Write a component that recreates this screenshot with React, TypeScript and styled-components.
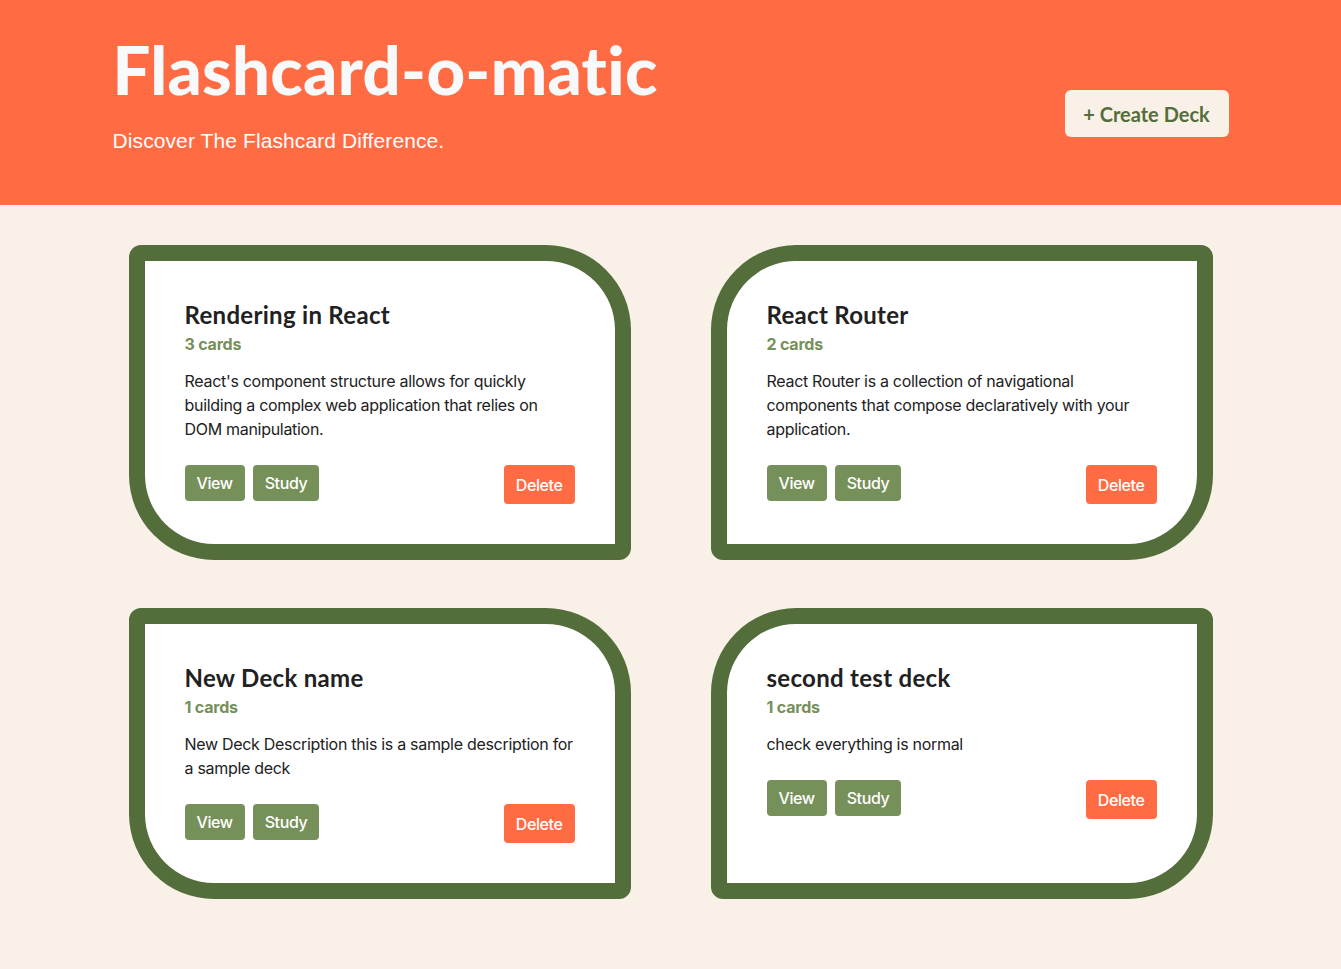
import React from "react";
import styled, { createGlobalStyle } from "styled-components";

const ORANGE = "#ff6b42";
const GREEN = "#536d3b";
const LIGHT_GREEN = "#76905a";
const CREAM = "#f9f1e7";

const GlobalStyle = createGlobalStyle`
  body {
    margin: 0;
    background: ${CREAM};
    font-family: Inter, "Liberation Sans", sans-serif;
    color: #222;
  }
  * {
    box-sizing: border-box;
  }
`;

const Header = styled.header`
  background: ${ORANGE};
  height: 205px;
`;

const HeaderInner = styled.div`
  max-width: 1116px;
  margin: 0 auto;
  padding-top: 36px;
  display: flex;
  justify-content: space-between;
  align-items: flex-start;
`;

const Title = styled.h1`
  margin: 0;
  font-family: Lato, sans-serif;
  font-weight: 900;
  font-size: 67px;
  line-height: 1;
  letter-spacing: 0.3px;
  color: #f8f9fa;
`;

const Tagline = styled.p`
  margin: 26px 0 0;
  font-family: "Liberation Sans", Arial, sans-serif;
  font-size: 21px;
  line-height: 24px;
  letter-spacing: 0.1px;
  color: #fff;
`;

const CreateButton = styled.button`
  margin-top: 54px;
  width: 164px;
  height: 47px;
  border: none;
  border-radius: 6px;
  background: ${CREAM};
  color: ${GREEN};
  font-family: Lato, sans-serif;
  font-weight: 700;
  font-size: 20px;
  cursor: pointer;
`;

const DeckGrid = styled.main`
  max-width: 1084px;
  margin: 40px auto 0;
  padding-bottom: 60px;
  display: grid;
  grid-template-columns: 1fr 1fr;
  column-gap: 80px;
  row-gap: 48px;
`;

const DeckCard = styled.section<{ $flip: boolean }>`
  background: #fff;
  border: 16px solid ${GREEN};
  border-radius: ${(p) => (p.$flip ? "85px 12px 85px 12px" : "12px 85px 12px 85px")};
  padding: 39px 40px 40px;
`;

const DeckName = styled.h2`
  margin: 0;
  font-family: Lato, sans-serif;
  font-weight: 700;
  font-size: 24px;
  line-height: 29px;
  letter-spacing: 0.3px;
  color: #212121;
`;

const CardCount = styled.div`
  margin-top: 3px;
  font-weight: 700;
  font-size: 16px;
  line-height: 24px;
  letter-spacing: -0.2px;
  color: ${LIGHT_GREEN};
`;

const Description = styled.p`
  margin: 13px 0 0;
  font-size: 16px;
  line-height: 24px;
  letter-spacing: -0.3px;
  color: #222;
`;

const Actions = styled.div`
  margin-top: 24px;
  display: flex;
  justify-content: space-between;
  align-items: flex-start;
`;

const ButtonGroup = styled.div`
  display: flex;
  gap: 8px;
`;

const ActionButton = styled.button<{ $danger?: boolean }>`
  border: none;
  border-radius: 4px;
  padding: ${(p) => (p.$danger ? "8px 12px 7px" : "6px 12px")};
  background: ${(p) => (p.$danger ? ORANGE : LIGHT_GREEN)};
  color: #fff;
  font-family: Inter, "Liberation Sans", sans-serif;
  font-weight: 500;
  font-size: 16px;
  line-height: 24px;
  letter-spacing: -0.4px;
  cursor: pointer;
`;

type Deck = {
  id: number;
  name: string;
  description: string;
  count: number;
};

const decks: Deck[] = [
  {
    id: 1,
    name: "Rendering in React",
    description:
      "React's component structure allows for quickly building a complex web application that relies on DOM manipulation.",
    count: 3,
  },
  {
    id: 2,
    name: "React Router",
    description:
      "React Router is a collection of navigational components that compose declaratively with your application.",
    count: 2,
  },
  {
    id: 3,
    name: "New Deck name",
    description: "New Deck Description this is a sample description for a sample deck",
    count: 1,
  },
  {
    id: 4,
    name: "second test deck",
    description: "check everything is normal",
    count: 1,
  },
];

const App = () => {
  return (
    <>
      <GlobalStyle />
      <Header>
        <HeaderInner>
          <div>
            <Title>Flashcard-o-matic</Title>
            <Tagline>Discover The Flashcard Difference.</Tagline>
          </div>
          <CreateButton type="button">+ Create Deck</CreateButton>
        </HeaderInner>
      </Header>
      <DeckGrid>
        {decks.map((deck, i) => (
          <DeckCard key={deck.id} $flip={i % 2 === 1}>
            <DeckName>{deck.name}</DeckName>
            <CardCount>{deck.count} cards</CardCount>
            <Description>{deck.description}</Description>
            <Actions>
              <ButtonGroup>
                <ActionButton type="button">View</ActionButton>
                <ActionButton type="button">Study</ActionButton>
              </ButtonGroup>
              <ActionButton type="button" $danger>
                Delete
              </ActionButton>
            </Actions>
          </DeckCard>
        ))}
      </DeckGrid>
    </>
  );
};

export default App;
